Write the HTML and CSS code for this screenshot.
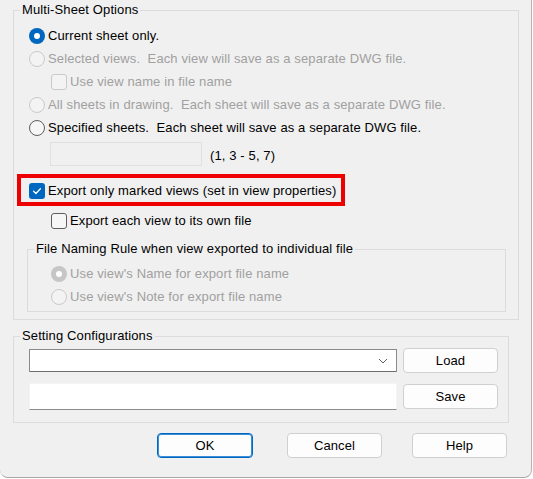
FILE: index.html
```html
<!DOCTYPE html>
<html>
<head>
<meta charset="utf-8">
<link rel="stylesheet" href="styles.css">
</head>
<body>
<div class="window">
  <fieldset class="group group-multi">
    <legend>Multi-Sheet Options</legend>
    <div class="group-body">
      <div class="row"><span class="radio checked"></span><span>Current sheet only.</span></div>
      <div class="row disabled"><span class="radio"></span><span>Selected views.&nbsp; Each view will save as a separate DWG file.</span></div>
      <div class="row disabled indent"><span class="check"></span><span>Use view name in file name</span></div>
      <div class="row disabled"><span class="radio"></span><span>All sheets in drawing.&nbsp; Each sheet will save as a separate DWG file.</span></div>
      <div class="row"><span class="radio"></span><span>Specified sheets.&nbsp; Each sheet will save as a separate DWG file.</span></div>
      <div class="sheet-range"><span class="range-box"></span><span class="range-hint">(1, 3 - 5, 7)</span></div>
      <div class="highlight">
        <div class="row"><span class="check checked"><svg viewBox="0 0 16 16" width="16" height="16"><path d="M4.6 8.3 L6.9 10.5 L11.4 5.7" fill="none" stroke="#fff" stroke-width="1.3" stroke-linecap="round" stroke-linejoin="round"/></svg></span><span>Export only marked views (set in view properties)</span></div>
      </div>
      <div class="row indent"><span class="check"></span><span>Export each view to its own file</span></div>
      <fieldset class="group group-naming">
        <legend>File Naming Rule when view exported to individual file</legend>
        <div class="naming-body">
          <div class="row disabled"><span class="radio checked-disabled"></span><span>Use view's Name for export file name</span></div>
          <div class="row disabled"><span class="radio"></span><span>Use view's Note for export file name</span></div>
        </div>
      </fieldset>
    </div>
  </fieldset>

  <fieldset class="group group-config">
    <legend>Setting Configurations</legend>
    <div class="config-body">
      <div class="config-row">
        <div class="combo"><svg class="chevron" viewBox="0 0 10 6" width="10" height="6"><path d="M1 1 L5 5 L9 1" fill="none" stroke="#606060" stroke-width="1"/></svg></div>
        <button class="btn">Load</button>
      </div>
      <div class="config-row tall">
        <div class="field"></div>
        <button class="btn">Save</button>
      </div>
    </div>
  </fieldset>

  <div class="actions">
    <button class="btn btn-default">OK</button>
    <button class="btn btn-cancel">Cancel</button>
    <button class="btn btn-help">Help</button>
  </div>
</div>
</body>
</html>
```

FILE: styles.css
```css
html, body {
  margin: 0;
  padding: 0;
  background: #ffffff;
}

body {
  font-family: "Liberation Sans", Arial, sans-serif;
  font-size: 13px;
  letter-spacing: 0.12px;
  color: #000;
}

.window {
  width: 532px;
  height: 478px;
  box-sizing: border-box;
  background: #f0f0f0;
  border-right: 1px solid #b4b4b4;
  border-bottom: 1px solid #a8a8a8;
  border-radius: 0 0 8px 8px;
  display: flex;
  flex-direction: column;
  overflow: hidden;
}

.group {
  margin: 0;
  padding: 0;
  border: 1px solid #dcdcdc;
  box-sizing: border-box;
  min-width: 0;
}

.group > legend {
  margin-left: 6px;
  padding: 0 2px;
  line-height: 16px;
  height: 16px;
  color: #000;
}

.group-multi {
  margin-top: 2px;
  margin-left: 13px;
  width: 506px;
}

.group-body {
  padding: 6px 0 7px 15px;
  display: flex;
  flex-direction: column;
}

.row {
  height: 23px;
  display: flex;
  align-items: center;
  gap: 3px;
  white-space: nowrap;
}

.row.indent {
  margin-left: 22px;
}

.row.disabled {
  color: #a0a0a0;
}

.radio {
  width: 16px;
  height: 16px;
  box-sizing: border-box;
  border-radius: 50%;
  border: 1px solid #5e5e5e;
  background: #f6f6f6;
  flex: none;
  position: relative;
}

.disabled .radio {
  border-color: #cacaca;
  background: #f3f3f3;
}

.radio.checked {
  border: none;
  background: #0067c0;
}

.radio.checked::after,
.radio.checked-disabled::after {
  content: "";
  position: absolute;
  left: 5px;
  top: 5px;
  width: 6px;
  height: 6px;
  border-radius: 50%;
  background: #ffffff;
}

.disabled .radio.checked-disabled {
  border: none;
  background: #c6c6c6;
}

.check {
  width: 16px;
  height: 16px;
  box-sizing: border-box;
  border-radius: 3px;
  border: 1px solid #5e5e5e;
  background: #f6f6f6;
  flex: none;
  display: flex;
}

.disabled .check {
  border-color: #cacaca;
  background: #f3f3f3;
}

.check.checked {
  border: none;
  background: #0067c0;
}

.sheet-range {
  margin-top: 3px;
  margin-left: 21px;
  height: 24px;
  display: flex;
  align-items: center;
  gap: 8px;
}

.range-box {
  width: 152px;
  height: 24px;
  box-sizing: border-box;
  border: 1px solid #e0e0e0;
  background: #f0f0f0;
}

.range-hint {
  padding-top: 2px;
}

.highlight {
  margin-top: 8px;
  margin-left: -12px;
  width: 328px;
  box-sizing: border-box;
  border: 4px solid #ee0000;
  padding-left: 8px;
}

.highlight .row {
  height: 23px;
  padding-top: 1px;
}

.highlight + .row {
  margin-top: 3px;
}

.group-naming {
  margin-top: 9px;
  margin-left: -2px;
  width: 479px;
}

.naming-body {
  padding: 5px 0 3px 23px;
}

.group-config {
  margin-top: 8px;
  margin-left: 13px;
  width: 496px;
}

.config-body {
  padding: 4px 9px 12px 15px;
  display: flex;
  flex-direction: column;
  gap: 10px;
}

.config-row {
  height: 25px;
  display: flex;
  align-items: center;
  gap: 6px;
}

.config-row.tall {
  height: 27px;
}

.combo {
  width: 368px;
  height: 23px;
  box-sizing: border-box;
  background: #ffffff;
  border: 1px solid #8a8a8a;
  border-bottom-color: #6e6e6e;
  border-radius: 1px;
  display: flex;
  align-items: center;
  justify-content: flex-end;
  padding-right: 8px;
}

.chevron {
  display: block;
}

.field {
  width: 368px;
  height: 27px;
  box-sizing: border-box;
  background: #ffffff;
  border: 1px solid #f4f4f4;
  border-bottom: 1px solid #8d8d8d;
}

.btn {
  width: 95px;
  height: 25px;
  box-sizing: border-box;
  border: 1px solid #d0d0d0;
  border-radius: 4px;
  background: #fdfdfd;
  font-family: "Liberation Sans", Arial, sans-serif;
  font-size: 13px;
  letter-spacing: 0.12px;
  color: #000;
  padding: 0;
  flex: none;
}

.actions {
  margin-top: 10px;
  padding-left: 157px;
  display: flex;
}

.btn-default {
  width: 96px;
  border: 1px solid #0067c0;
  box-shadow: inset 0 0 0 1px #3c8fd6;
}

.btn-cancel {
  margin-left: 34px;
}

.btn-help {
  margin-left: 30px;
}
```
